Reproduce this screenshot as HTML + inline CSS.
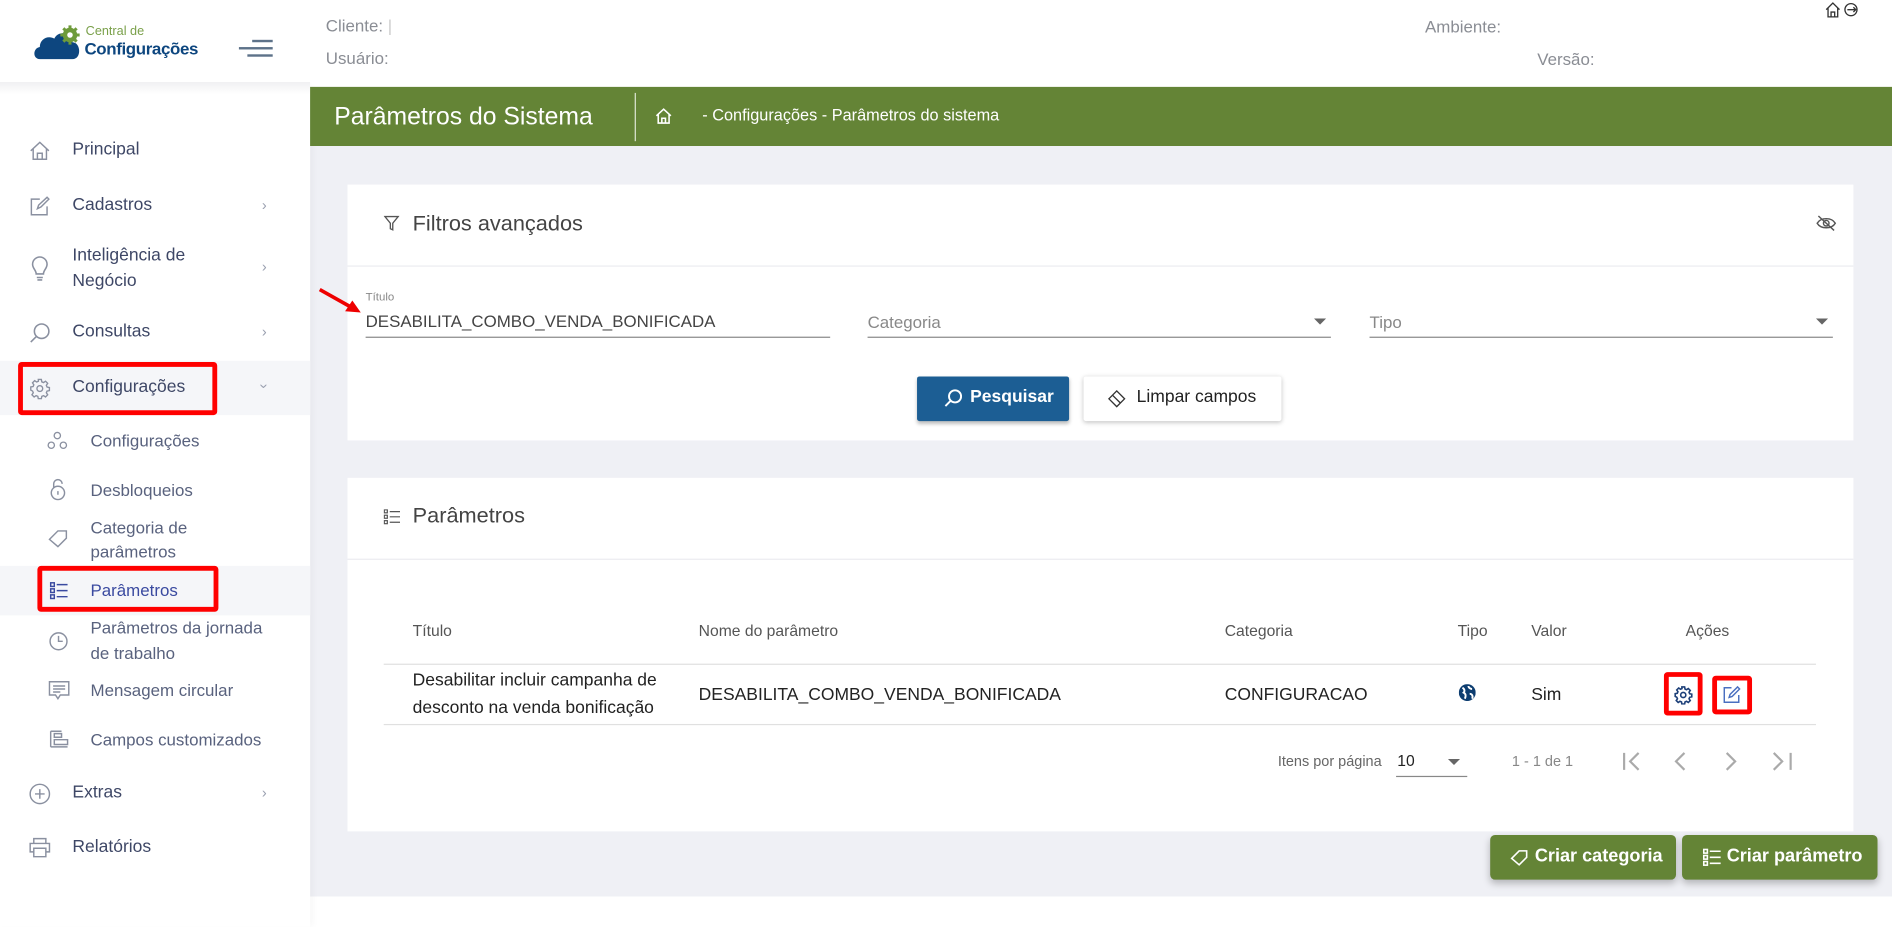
<!DOCTYPE html>
<html><head><meta charset="utf-8">
<style>
html,body{margin:0;padding:0;width:1892px;height:927px;overflow:hidden;background:#fff;font-family:"Liberation Sans",sans-serif;}
#w{position:absolute;left:0;top:0;width:1568px;height:768px;transform:scale(1.20663);transform-origin:0 0;}
.a{position:absolute;white-space:nowrap;}
.side{color:#3e4766;font-size:14.5px;}
.sub{color:#59627e;font-size:14px;}
.ico{position:absolute;}
.chev{position:absolute;left:217px;color:#9aa0b0;font-size:12px;}
.hd{color:#8a8d94;font-size:14px;}
.th{color:#555;font-size:13px;}
.td{color:#222;font-size:14.5px;}
.red{position:absolute;border:4px solid #f00;border-radius:3px;box-sizing:border-box;}
</style></head><body><div id="w">
<div class="a" style="left:257px;top:121px;width:1311px;height:622px;background:#eff0f5"></div>
<div class="a" style="left:0;top:0;width:1568px;height:72px;background:#fff"></div>
<div class="a" style="left:0;top:72px;width:257px;height:696px;background:#fff;box-shadow:2px 0 6px rgba(0,0,0,.04)"></div>
<div class="a" style="left:0;top:68px;width:257px;height:10px;background:linear-gradient(#f0f0f2,#fff)"></div>
<svg class="ico" style="left:27px;top:20px" width="42" height="30" viewBox="0 0 42 30">
<path d="M6 29 C0 29 0 20 6 19 C6 12 13 9 18 12 C21 5 33 6 33 15 C40 15 41 29 33 29 Z" fill="#0d467f"/>
<circle cx="31" cy="9" r="6" fill="#6e9b3a"/>
<g stroke="#6e9b3a" stroke-width="2.5"><line x1="31" y1="1" x2="31" y2="17"/><line x1="23" y1="9" x2="39" y2="9"/><line x1="25.5" y1="3.5" x2="36.5" y2="14.5"/><line x1="36.5" y1="3.5" x2="25.5" y2="14.5"/></g>
<circle cx="31" cy="9" r="2.3" fill="#fff"/></svg>
<div class="a" style="left:71px;top:20px;font-size:10.5px;color:#7aa04a">Central de</div>
<div class="a" style="left:70px;top:32px;font-size:14px;font-weight:bold;color:#0d467f;letter-spacing:-0.3px">Configurações</div>
<div class="a" style="left:209px;top:33px;width:17px;height:1.5px;background:#5d7289"></div>
<div class="a" style="left:198px;top:39px;width:28px;height:2px;background:#5d7289"></div>
<div class="a" style="left:205px;top:45px;width:21px;height:1.5px;background:#5d7289"></div>
<div class="a hd" style="left:270px;top:13px">Cliente: <span style="color:#ccc">|</span></div>
<div class="a hd" style="left:270px;top:40px">Usuário:</div>
<div class="a hd" style="left:1181px;top:14px">Ambiente:</div>
<div class="a hd" style="left:1274px;top:41px">Versão:</div>
<svg class="ico" style="left:1512px;top:1px" width="30" height="14" viewBox="0 0 30 14" fill="none" stroke="#333" stroke-width="1.1">
<path d="M1.5 7 L7 1.5 L12.5 7 M3 5.5 V13 H11 V5.5 M5.5 13 V9 H8.5 V13"/><circle cx="22" cy="7" r="5"/><path d="M19 7 H26 M24 5 L26 7 L24 9"/></svg>
<div class="a" style="left:257px;top:72px;width:1311px;height:49px;background:#648436"></div>
<div class="a" style="left:277px;top:85px;font-size:20.5px;color:#fff">Parâmetros do Sistema</div>
<div class="a" style="left:526px;top:77px;width:1px;height:40px;background:#dfe7d4"></div>
<svg class="ico" style="left:543px;top:89px" width="14" height="14" viewBox="0 0 14 14" fill="none" stroke="#fff" stroke-width="1.3"><path d="M1 7 L7 1.5 L13 7 M2.5 5.8 V13 H11.5 V5.8 M5.5 13 V9 H8.5 V13"/></svg>
<div class="a" style="left:582px;top:88px;font-size:13.5px;color:#fff">- Configurações - Parâmetros do sistema</div>
<div class="a" style="left:0;top:299px;width:257px;height:45px;background:#f5f6f9"></div>
<div class="a" style="left:0;top:469px;width:257px;height:41px;background:#f5f6f9"></div>
<svg class="ico" style="left:24px;top:116px" width="18" height="18" viewBox="0 0 18 18" fill="none" stroke="#8a90a0" stroke-width="1.2"><path d="M1.5 9 L9 2 L16.5 9 M3.5 7.5 V16 H14.5 V7.5 M7 16 V11 H11 V16"/></svg>
<div class="a side" style="left:60px;top:116px">Principal</div>
<svg class="ico" style="left:24px;top:162px" width="18" height="18" viewBox="0 0 18 18" fill="none" stroke="#8a90a0" stroke-width="1.2"><path d="M9 3 H2 V16 H15 V9 M7 11 L8 8 L15 1.5 L16.5 3 L10 9.5 Z"/></svg>
<div class="a side" style="left:60px;top:162px">Cadastros</div><div class="chev" style="top:163px">&#x203A;</div>
<svg class="ico" style="left:24px;top:212px" width="18" height="22" viewBox="0 0 18 22" fill="none" stroke="#8a90a0" stroke-width="1.3"><path d="M6 15 C6 12 3 10.5 3 7 A6 6 0 0 1 15 7 C15 10.5 12 12 12 15 Z M6.5 18 H11.5 M7 20 H11"/></svg>
<div class="a side" style="left:60px;top:204px">Inteligência de</div>
<div class="a side" style="left:60px;top:225px">Negócio</div><div class="chev" style="top:214px">&#x203A;</div>
<svg class="ico" style="left:24px;top:267px" width="18" height="18" viewBox="0 0 18 18" fill="none" stroke="#8a90a0" stroke-width="1.3"><circle cx="10.5" cy="7.5" r="6"/><path d="M6.3 11.7 L1.5 16.5"/></svg>
<div class="a side" style="left:60px;top:267px">Consultas</div><div class="chev" style="top:268px">&#x203A;</div>
<svg class="ico" style="left:24px;top:313px" width="18" height="18" viewBox="0 0 24 24" fill="none" stroke="#8a90a0" stroke-width="1.5"><circle cx="12" cy="12" r="3.2"/><path d="M10.3 2h3.4l.5 2.6 1.9.8 2.2-1.5 2.4 2.4-1.5 2.2.8 1.9 2.6.5v3.4l-2.6.5-.8 1.9 1.5 2.2-2.4 2.4-2.2-1.5-1.9.8-.5 2.6h-3.4l-.5-2.6-1.9-.8-2.2 1.5-2.4-2.4 1.5-2.2-.8-1.9L2 13.7v-3.4l2.6-.5.8-1.9-1.5-2.2 2.4-2.4 2.2 1.5 1.9-.8z"/></svg>
<div class="a side" style="left:60px;top:313px">Configurações</div><div class="chev" style="top:313px;transform:rotate(90deg)">&#x203A;</div>
<svg class="ico" style="left:39px;top:357px" width="17" height="16" viewBox="0 0 17 16" fill="none" stroke="#8a90a0" stroke-width="1.1"><circle cx="8.5" cy="4" r="2.6"/><circle cx="3.5" cy="12" r="2.6"/><circle cx="13.5" cy="12" r="2.6"/></svg>
<div class="a sub" style="left:75px;top:357px">Configurações</div>
<svg class="ico" style="left:41px;top:396px" width="14" height="19" viewBox="0 0 14 19" fill="none" stroke="#8a90a0" stroke-width="1.2"><path d="M3.5 8 V5 A3.5 3.5 0 0 1 10.5 5"/><circle cx="7" cy="12.5" r="5.5"/><path d="M7 11 V14"/></svg>
<div class="a sub" style="left:75px;top:398px">Desbloqueios</div>
<svg class="ico" style="left:39px;top:438px" width="18" height="16" viewBox="0 0 18 16" fill="none" stroke="#8a90a0" stroke-width="1.2"><path d="M2 9 L9 2 H16 V8 L9 15 Z"/></svg>
<div class="a sub" style="left:75px;top:429px">Categoria de</div>
<div class="a sub" style="left:75px;top:449px">parâmetros</div>
<svg class="ico" style="left:41px;top:482px" width="16" height="15" viewBox="0 0 16 15" fill="none" stroke="#3a4aa0" stroke-width="1.2"><rect x="1" y="1" width="3" height="3"/><rect x="1" y="6" width="3" height="3"/><rect x="1" y="11" width="3" height="3"/><path d="M6 2.5 H15 M6 7.5 H15 M6 12.5 H15"/></svg>
<div class="a" style="left:75px;top:481px;font-size:14px;color:#3a4aa0">Parâmetros</div>
<svg class="ico" style="left:40px;top:523px" width="17" height="17" viewBox="0 0 17 17" fill="none" stroke="#8a90a0" stroke-width="1.2"><circle cx="8.5" cy="8.5" r="7"/><path d="M8.5 4 V8.5 H12"/></svg>
<div class="a sub" style="left:75px;top:512px">Parâmetros da jornada</div>
<div class="a sub" style="left:75px;top:533px">de trabalho</div>
<svg class="ico" style="left:40px;top:564px" width="18" height="17" viewBox="0 0 18 17" fill="none" stroke="#8a90a0" stroke-width="1.2"><path d="M1 1 H17 V12 H10 L8 15 L6 12 H1 Z M4 4.5 H14 M4 7 H14 M4 9.5 H10"/></svg>
<div class="a sub" style="left:75px;top:564px">Mensagem circular</div>
<svg class="ico" style="left:41px;top:605px" width="16" height="16" viewBox="0 0 16 16" fill="none" stroke="#8a90a0" stroke-width="1.2"><path d="M1 1 H10 M1 1 V14 M4 3 H10 V6 H4 Z M4 8 H15 V12 H4 Z M1 14 H15"/></svg>
<div class="a sub" style="left:75px;top:605px">Campos customizados</div>
<svg class="ico" style="left:24px;top:649px" width="18" height="18" viewBox="0 0 18 18" fill="none" stroke="#8a90a0" stroke-width="1.2"><circle cx="9" cy="9" r="8"/><path d="M9 5 V13 M5 9 H13"/></svg>
<div class="a side" style="left:60px;top:649px">Extras</div><div class="chev" style="top:650px">&#x203A;</div>
<svg class="ico" style="left:24px;top:694px" width="18" height="17" viewBox="0 0 18 17" fill="none" stroke="#8a90a0" stroke-width="1.2"><path d="M4 5 V1 H14 V5 M4 12 H1 V5 H17 V12 H14 M4 9 H14 V16 H4 Z"/></svg>
<div class="a side" style="left:60px;top:694px">Relatórios</div>
<div class="red" style="left:15px;top:300px;width:165px;height:44px"></div>
<div class="red" style="left:31px;top:469px;width:150px;height:38px"></div>
<div class="a" style="left:288px;top:153px;width:1248px;height:212px;background:#fff"></div>
<svg class="ico" style="left:318px;top:178px" width="13" height="14" viewBox="0 0 13 14" fill="none" stroke="#555" stroke-width="1.1"><path d="M1 1.5 H12 L7.5 7 V12.5 L5.5 11.5 V7 Z"/></svg>
<div class="a" style="left:342px;top:175px;font-size:18px;color:#444">Filtros avançados</div>
<svg class="ico" style="left:1505px;top:178px" width="17" height="14" viewBox="0 0 17 14" fill="none" stroke="#555" stroke-width="1.2"><path d="M1 7 C4 2 13 2 16 7 C13 12 4 12 1 7 Z"/><circle cx="8.5" cy="7" r="2.3"/><path d="M2 1 L15 13"/></svg>
<div class="a" style="left:288px;top:220px;width:1248px;height:1px;background:#ebecf0"></div>
<div class="a" style="left:303px;top:241px;font-size:9.5px;color:#888">Título</div>
<div class="a" style="left:303px;top:258px;font-size:14px;color:#444">DESABILITA_COMBO_VENDA_BONIFICADA</div>
<div class="a" style="left:303px;top:279px;width:385px;height:1px;background:#888"></div>
<div class="a" style="left:719px;top:259px;font-size:14px;color:#888">Categoria</div>
<div class="a" style="left:719px;top:279px;width:384px;height:1px;background:#888"></div>
<div class="a" style="left:1089px;top:264px;border:5px solid transparent;border-top:5px solid #666"></div>
<div class="a" style="left:1135px;top:259px;font-size:14px;color:#888">Tipo</div>
<div class="a" style="left:1135px;top:279px;width:384px;height:1px;background:#888"></div>
<div class="a" style="left:1505px;top:264px;border:5px solid transparent;border-top:5px solid #666"></div>
<svg class="ico" style="left:262px;top:237px" width="40" height="25" viewBox="0 0 40 25"><path d="M3 3 L28 17" stroke="#e00" stroke-width="3"/><path d="M37 22 L24 21 L30 12 Z" fill="#e00"/></svg>
<div class="a" style="left:760px;top:312px;width:126px;height:37px;background:#1c5e94;border-radius:2px;box-shadow:0 2px 3px rgba(0,0,0,.25)"></div>
<svg class="ico" style="left:782px;top:322px" width="16" height="16" viewBox="0 0 16 16" fill="none" stroke="#fff" stroke-width="1.6"><circle cx="9.5" cy="6.5" r="5"/><path d="M6 10 L1.5 14.5"/></svg>
<div class="a" style="left:804px;top:321px;font-size:14.5px;font-weight:bold;color:#fff">Pesquisar</div>
<div class="a" style="left:898px;top:312px;width:164px;height:37px;background:#fff;border-radius:2px;box-shadow:0 1px 4px rgba(0,0,0,.25)"></div>
<svg class="ico" style="left:918px;top:323px" width="16" height="15" viewBox="0 0 16 15" fill="none" stroke="#333" stroke-width="1.1"><path d="M1 7.5 L7.5 1 L14 7.5 L7.5 14 Z M4 4.5 L10.5 11"/></svg>
<div class="a" style="left:942px;top:321px;font-size:14.5px;color:#222">Limpar campos</div>
<div class="a" style="left:288px;top:396px;width:1248px;height:293px;background:#fff"></div>
<svg class="ico" style="left:318px;top:422px" width="14" height="13" viewBox="0 0 14 13" fill="none" stroke="#555" stroke-width="1"><rect x="0.5" y="0.5" width="2.5" height="2.5"/><rect x="0.5" y="5" width="2.5" height="2.5"/><rect x="0.5" y="9.5" width="2.5" height="2.5"/><path d="M5 2 H13.5 M5 6.3 H13.5 M5 10.8 H13.5"/></svg>
<div class="a" style="left:342px;top:417px;font-size:18px;color:#444">Parâmetros</div>
<div class="a" style="left:288px;top:463px;width:1248px;height:1px;background:#ebecf0"></div>
<div class="a th" style="left:342px;top:515px">Título</div>
<div class="a th" style="left:579px;top:515px">Nome do parâmetro</div>
<div class="a th" style="left:1015px;top:515px">Categoria</div>
<div class="a th" style="left:1208px;top:515px">Tipo</div>
<div class="a th" style="left:1269px;top:515px">Valor</div>
<div class="a th" style="left:1397px;top:515px">Ações</div>
<div class="a" style="left:318px;top:550px;width:1187px;height:1px;background:#e0e0e0"></div>
<div class="a td" style="left:342px;top:556px">Desabilitar incluir campanha de</div>
<div class="a td" style="left:342px;top:579px">desconto na venda bonificação</div>
<div class="a td" style="left:579px;top:568px">DESABILITA_COMBO_VENDA_BONIFICADA</div>
<div class="a td" style="left:1015px;top:568px">CONFIGURACAO</div>
<svg class="ico" style="left:1209px;top:567px" width="14" height="14" viewBox="0 0 14 14"><circle cx="7" cy="7" r="7" fill="#0d3d70"/><path d="M3 3 C5 4 5 6 4 7 C6 8 6 10 5 12 M8 1.5 C8 3 10 4 11 4 M9 8 C11 8 12 10 11 12" stroke="#fff" stroke-width="1.6" fill="none"/></svg>
<div class="a td" style="left:1269px;top:568px">Sim</div>
<div class="red" style="left:1379px;top:557px;width:32px;height:36px"></div>
<svg class="ico" style="left:1387px;top:568px" width="16" height="16" viewBox="0 0 24 24" fill="none" stroke="#1c3f78" stroke-width="2"><circle cx="12" cy="12" r="3.2"/><path d="M10.3 2h3.4l.5 2.6 1.9.8 2.2-1.5 2.4 2.4-1.5 2.2.8 1.9 2.6.5v3.4l-2.6.5-.8 1.9 1.5 2.2-2.4 2.4-2.2-1.5-1.9.8-.5 2.6h-3.4l-.5-2.6-1.9-.8-2.2 1.5-2.4-2.4 1.5-2.2-.8-1.9L2 13.7v-3.4l2.6-.5.8-1.9-1.5-2.2 2.4-2.4 2.2 1.5 1.9-.8z"/></svg>
<div class="red" style="left:1419px;top:560px;width:33px;height:32px"></div>
<svg class="ico" style="left:1428px;top:568px" width="15" height="15" viewBox="0 0 15 15" fill="none" stroke="#4a6fc0" stroke-width="1.2"><path d="M7 2 H1 V14 H13 V8 M5 10 L5.8 7.5 L12 1.3 L13.7 3 L7.5 9.2 Z"/></svg>
<div class="a" style="left:318px;top:600px;width:1187px;height:1px;background:#e0e0e0"></div>
<div class="a" style="left:1059px;top:624px;font-size:12px;color:#666">Itens por página</div>
<div class="a" style="left:1158px;top:623px;font-size:13px;color:#222">10</div>
<div class="a" style="left:1200px;top:629px;border:5px solid transparent;border-top:5px solid #666"></div>
<div class="a" style="left:1157px;top:643px;width:59px;height:1px;background:#888"></div>
<div class="a" style="left:1253px;top:624px;font-size:12px;color:#888">1 - 1 de 1</div>
<svg class="ico" style="left:1343px;top:622px" width="180" height="18" viewBox="0 0 180 18" fill="none" stroke="#aaa" stroke-width="1.8"><path d="M3 2 V16 M15 2 L8 9 L15 16"/><path d="M53 2 L46 9 L53 16"/><path d="M88 2 L95 9 L88 16"/><path d="M127 2 L134 9 L127 16 M141 2 V16"/></svg>
<div class="a" style="left:1235px;top:692px;width:154px;height:37px;background:#648436;border-radius:4px;box-shadow:0 3px 6px rgba(0,0,0,.25)"></div>
<svg class="ico" style="left:1251px;top:703px" width="16" height="15" viewBox="0 0 18 16" fill="none" stroke="#fff" stroke-width="1.5"><path d="M2 9 L9 2 H16 V8 L9 15 Z"/></svg>
<div class="a" style="left:1272px;top:701px;font-size:15px;font-weight:bold;color:#fff">Criar categoria</div>
<div class="a" style="left:1394px;top:692px;width:162px;height:37px;background:#648436;border-radius:4px;box-shadow:0 3px 6px rgba(0,0,0,.25)"></div>
<svg class="ico" style="left:1411px;top:703px" width="16" height="15" viewBox="0 0 16 15" fill="none" stroke="#fff" stroke-width="1.3"><rect x="1" y="1" width="3" height="3"/><rect x="1" y="6" width="3" height="3"/><rect x="1" y="11" width="3" height="3"/><path d="M6 2.5 H15 M6 7.5 H15 M6 12.5 H15"/></svg>
<div class="a" style="left:1431px;top:701px;font-size:15px;font-weight:bold;color:#fff">Criar parâmetro</div>
</div></body></html>
